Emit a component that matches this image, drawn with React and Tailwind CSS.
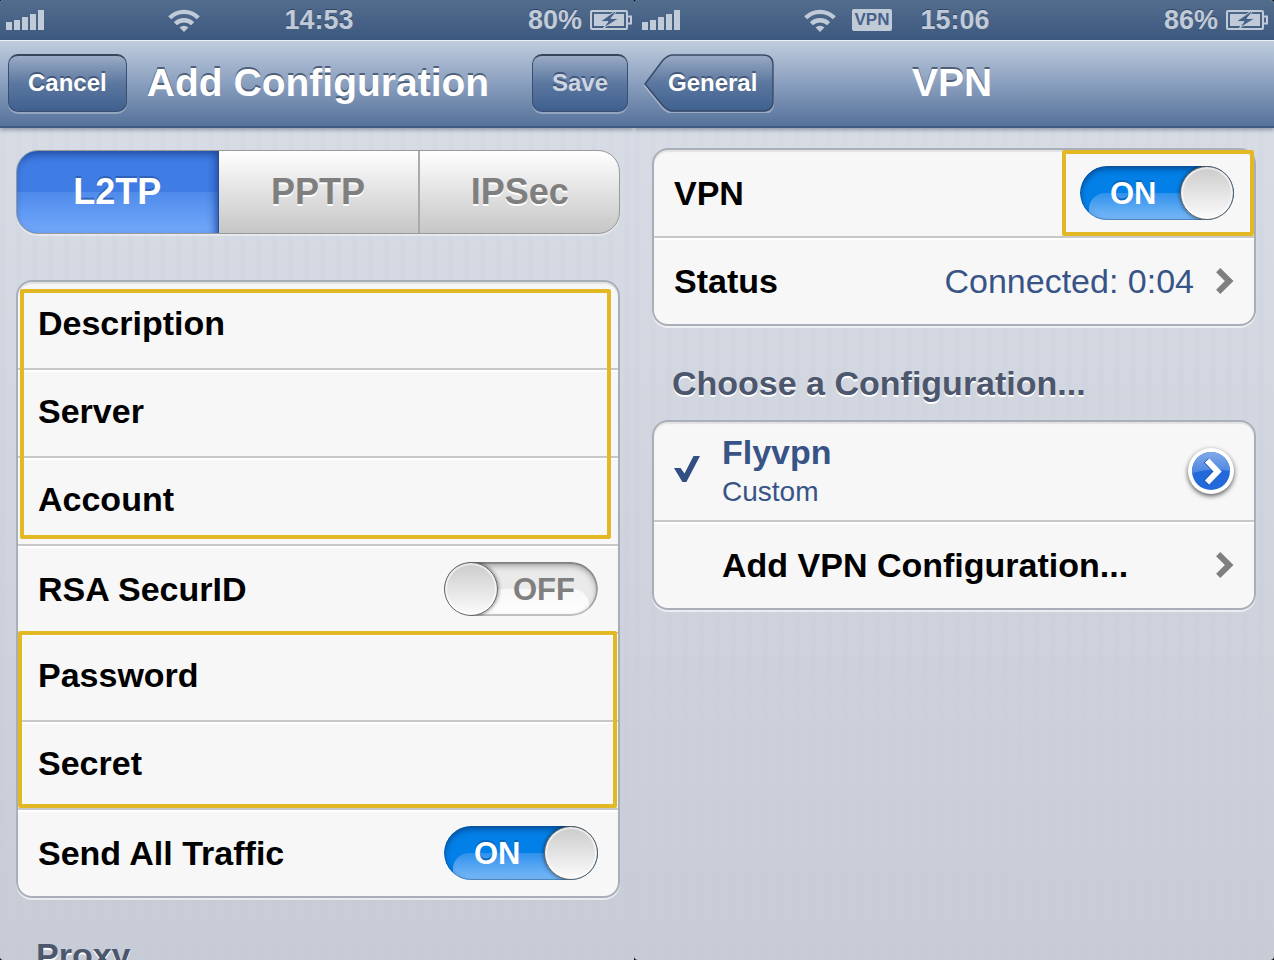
import { useState } from 'react';

const FONT = 'font-["Liberation_Sans",Arial,sans-serif]';

function SignalIcon() {
  return (
    <svg width="38" height="20" viewBox="0 0 38 20" fill="currentColor" aria-hidden="true">
      <rect x="0" y="12" width="6" height="8" />
      <rect x="8" y="10" width="6" height="10" />
      <rect x="16" y="7" width="6" height="13" />
      <rect x="24" y="4" width="6" height="16" />
      <rect x="32" y="0" width="6" height="20" />
    </svg>
  );
}

function WifiIcon() {
  return (
    <svg width="32" height="23" viewBox="0 0 32 23" aria-hidden="true">
      <g fill="none" stroke="currentColor" strokeWidth="4.4">
        <path d="M1.7 8.8 A20.2 20.2 0 0 1 30.3 8.8" />
        <path d="M7.4 14.8 A12.2 12.2 0 0 1 24.6 14.8" />
      </g>
      <path d="M11.6 18.6 A6.2 6.2 0 0 1 20.4 18.6 L16 23 Z" fill="currentColor" />
    </svg>
  );
}

function BatteryIcon() {
  return (
    <svg width="42" height="20" viewBox="0 0 42 20" aria-hidden="true">
      <rect x="1" y="1" width="36" height="18" rx="1" fill="none" stroke="currentColor" strokeWidth="2" />
      <path d="M38 6.5 H41 V13.5 H38" fill="none" stroke="currentColor" strokeWidth="2" />
      <rect x="4" y="4" width="30" height="12" fill="currentColor" />
      <path
        d="M24.5 1.5 L10 11.6 H18 L13 18.5 L29 8.4 H21 L26.5 1.5 Z"
        fill="#46618a"
        stroke="currentColor"
        strokeWidth="1"
      />
    </svg>
  );
}

function Chevron() {
  return (
    <svg width="18" height="26" viewBox="0 0 18 26" className="shrink-0" aria-hidden="true">
      <path d="M2.2 2.2 L13.2 13 L2.2 23.8" fill="none" stroke="#7f7f7f" strokeWidth="6" />
    </svg>
  );
}

function CheckIcon() {
  return (
    <svg width="26" height="26" viewBox="0 0 26 26" aria-hidden="true">
      <path d="M0 12 H6.5 L10.5 17.5 L19.5 0 H26 L12.4 26 H8.4 Z" fill="#324f85" />
    </svg>
  );
}

function StatusBar({ time, battery, vpn, className }) {
  return (
    <div
      className={
        'grid h-10 grid-cols-[1fr_auto_1fr] items-center bg-linear-to-b from-[#536d8e] to-[#3d597f] text-[27px] leading-8 font-bold text-[#c1cad7] text-shadow-[0_-1px_0_#2f4564] ' +
        className
      }
    >
      <div className="flex items-center">
        <SignalIcon />
        <span className="ml-[124px]">
          <WifiIcon />
        </span>
        {vpn && (
          <span className="ml-4 flex h-[22px] w-10 items-center justify-center rounded-xs bg-[#c1cad7] text-[17px] text-[#46618a] text-shadow-none">
            VPN
          </span>
        )}
      </div>
      <time>{time}</time>
      <div className="flex items-center justify-end gap-2">
        <span>{battery}</span>
        <BatteryIcon />
      </div>
    </div>
  );
}

function NavBar({ title, left, right, className }) {
  return (
    <header
      className={
        'relative z-10 grid h-[88px] grid-cols-[1fr_auto_1fr] items-center border-t border-b-2 border-t-[#eef2f7] border-b-[#3d5a84] bg-linear-to-b from-[#c0cddd] via-[#8a9fbf] to-[#56729a] pb-0.5 shadow-[0_2px_4px_rgba(60,70,90,0.45)] ' +
        className
      }
    >
      <div>{left}</div>
      <h1 className="text-[39px] leading-12 font-bold text-white text-shadow-[0_-2px_0_#4f5f78]">{title}</h1>
      <div className="text-right">{right}</div>
    </header>
  );
}

function NavButton({ children, disabled }) {
  return (
    <button
      type="button"
      disabled={disabled}
      className="h-[58px] rounded-[10px] border border-t-2 border-[#3a4e70] border-t-[#38455a] bg-linear-to-b from-[#9aabc5] via-[#5b779f] to-[#3f608f] px-[19px] text-[24px] font-bold text-white shadow-[0_2px_0_rgba(255,255,255,0.3)] text-shadow-[0_-2px_0_#43577a] disabled:text-[#ccd5e2]"
    >
      {children}
    </button>
  );
}

function BackButton({ children }) {
  return (
    <button
      type="button"
      className="relative flex h-[60px] w-[130px] items-center pl-6 text-[24px] font-bold text-white text-shadow-[0_-2px_0_#43577a]"
    >
      <svg width="130" height="60" viewBox="0 0 130 60" className="absolute inset-0" aria-hidden="true">
        <defs>
          <linearGradient id="back" x1="0" y1="0" x2="0" y2="1">
            <stop offset="0" stopColor="#9aabc5" />
            <stop offset="0.5" stopColor="#5b779f" />
            <stop offset="1" stopColor="#3f608f" />
          </linearGradient>
        </defs>
        <path
          d="M1 33 L19 9 Q24 4 29 4 H119 Q129 4 129 14 V50 Q129 60 119 60 H29 Q24 60 19 55 Z"
          fill="none"
          stroke="#ffffff"
          strokeOpacity="0.35"
          strokeWidth="2"
        />
        <path
          d="M1 31 L19 7 Q24 2 29 2 H119 Q129 2 129 12 V48 Q129 58 119 58 H29 Q24 58 19 53 Z"
          fill="url(#back)"
          stroke="#3a4b68"
          strokeWidth="1.5"
        />
      </svg>
      <span className="relative">{children}</span>
    </button>
  );
}

function Switch({ id, defaultChecked }) {
  const [on, setOn] = useState(defaultChecked);
  return (
    <div className="relative h-[54px] w-[154px] shrink-0 overflow-hidden rounded-full text-[31px] leading-[54px] font-bold">
      <input
        id={id}
        type="checkbox"
        role="switch"
        checked={on}
        onChange={(e) => setOn(e.target.checked)}
        className="absolute inset-0 block size-full appearance-none rounded-full bg-[#eaeaea] checked:bg-[#0380e8]"
      />
      <span
        className={
          on
            ? 'pointer-events-none absolute top-[27px] right-0 bottom-0 left-[9px] rounded-tl-[16px] bg-linear-to-b from-[#2d91ec] to-[#78b9f7]'
            : 'pointer-events-none absolute top-[27px] right-[9px] bottom-0 left-0 rounded-tr-[16px] bg-linear-to-b from-[#f7f7f7] to-white'
        }
      />
      <span
        className={
          on
            ? 'pointer-events-none absolute inset-y-0 left-[30px] pt-px text-white text-shadow-[0_-2px_0_#0868bd]'
            : 'pointer-events-none absolute inset-y-0 right-[23px] pt-px text-[#7f7f7f]'
        }
      >
        {on ? 'ON' : 'OFF'}
      </span>
      <span
        className={
          on
            ? 'pointer-events-none absolute inset-0 rounded-full shadow-[inset_0_0_0_1px_rgba(30,80,130,0.4),inset_0_3px_6px_rgba(0,30,80,0.55)]'
            : 'pointer-events-none absolute inset-0 rounded-full shadow-[inset_0_0_0_2px_rgba(0,0,0,0.2),inset_0_3px_7px_rgba(0,0,0,0.4)]'
        }
      />
      <span
        className={
          'pointer-events-none absolute top-0 size-[54px] rounded-full border border-[#606060] bg-linear-to-b from-[#cbcbcb] to-[#fcfcfc] shadow-[0_0_4px_rgba(0,0,0,0.6),inset_0_0_1px_2px_rgba(255,255,255,0.6)] ' +
          (on ? 'right-0' : 'left-0')
        }
      />
    </div>
  );
}

function Card({ children }) {
  return (
    <div className="rounded-[16px] border-2 border-[#a9afb9] bg-[#f7f7f7] text-[34px] leading-10 font-bold text-black shadow-[0_2px_0_rgba(255,255,255,0.6),inset_0_2px_1px_#e2e2e2]">
      {children}
    </div>
  );
}

const ROW = 'flex items-center px-5';
const LINE = ' border-t-2 border-[#c8c8c8] shadow-[inset_0_2px_0_white]';

function FieldRow({ label, type = 'text', first }) {
  const id = label.toLowerCase();
  return (
    <div className={ROW + ' pb-1 ' + (first ? 'h-[86px]' : 'h-[88px]' + LINE)}>
      <label htmlFor={id}>{label}</label>
      <input id={id} type={type} className="ml-4 min-w-0 flex-1 bg-transparent font-normal outline-none" />
    </div>
  );
}

function SwitchRow({ id, label, checked, first }) {
  return (
    <div className={ROW + ' justify-between ' + (first ? 'h-[86px]' : 'h-[88px]' + LINE)}>
      <label htmlFor={id}>{label}</label>
      <Switch id={id} defaultChecked={checked} />
    </div>
  );
}

function SectionTitle({ children }) {
  return (
    <h2 className="mt-[37px] mb-[17px] px-5 text-[34px] leading-10 font-bold text-[#4c566c] text-shadow-[0_2px_0_#fff]">
      {children}
    </h2>
  );
}

function Segments() {
  const [active, setActive] = useState('L2TP');
  return (
    <div className="grid h-[84px] grid-cols-3 overflow-hidden rounded-[22px] border border-[#9a9a9a] bg-linear-to-b from-white to-[#c6c6c6] text-[36px] font-bold shadow-[0_2px_0_rgba(255,255,255,0.4)]">
      {['L2TP', 'PPTP', 'IPSec'].map((name) => (
        <button
          key={name}
          type="button"
          aria-pressed={active === name}
          onClick={() => setActive(name)}
          className={
            active === name
              ? 'relative -m-px rounded-l-[22px] bg-[linear-gradient(#3f7ce3_0_50%,#4f8bea_50%,#73a9fc)] text-white shadow-[inset_-3px_4px_8px_#1f4a9c,inset_0_0_0_1px_#2c5cb0] text-shadow-[0_-2px_0_#2f62b8]'
              : 'text-[#7f7f7f] text-shadow-[0_2px_0_#fff] not-first:not-nth-2:border-l-2 not-first:not-nth-2:border-[#aaaaaa]'
          }
        >
          {name}
        </button>
      ))}
    </div>
  );
}

function Screen({ children, className }) {
  return (
    <section
      className={
        'h-full overflow-hidden bg-[repeating-linear-gradient(90deg,rgba(185,195,220,0.1)_0_6px,transparent_6px_16px),linear-gradient(#dadee7,#c8ccd6)] ' +
        className
      }
    >
      {children}
    </section>
  );
}

export default function App() {
  return (
    <main className={FONT + ' grid h-screen grid-cols-[634fr_640fr] overflow-hidden bg-black'}>
      <Screen className="rounded-l-[3px]">
        <StatusBar time="14:53" battery="80%" className="pr-0.5 pl-1.5" />
        <NavBar
          title="Add Configuration"
          left={<NavButton>Cancel</NavButton>}
          right={<NavButton disabled>Save</NavButton>}
          className="pr-1.5 pl-2"
        />
        <div className="pt-[22px] pr-3.5 pl-4">
          <Segments />
          <div className="h-[46px]" />
          <Card>
            <div className="relative">
              <FieldRow label="Description" first />
              <FieldRow label="Server" />
              <FieldRow label="Account" />
              <div className="pointer-events-none absolute top-[7px] right-[7px] bottom-[5px] left-[2px] rounded-xs border-4 border-[#e2b824]" />
            </div>
            <SwitchRow id="rsa" label="RSA SecurID" checked={false} />
            <div className="relative">
              <FieldRow label="Password" type="password" />
              <FieldRow label="Secret" type="password" />
              <div className="pointer-events-none absolute -top-px right-px bottom-0 left-0 rounded-xs border-4 border-[#e2b824]" />
            </div>
            <SwitchRow id="traffic" label="Send All Traffic" checked />
          </Card>
          <SectionTitle>Proxy</SectionTitle>
        </div>
      </Screen>

      <Screen className="rounded-[4px]">
        <StatusBar time="15:06" battery="86%" vpn className="pr-1.5 pl-2" />
        <NavBar title="VPN" left={<BackButton>General</BackButton>} className="pr-3.5 pl-2.5" />
        <div className="px-[18px] pt-5">
          <Card>
            <div className="relative">
              <SwitchRow id="vpn" label="VPN" checked first />
              <div className="pointer-events-none absolute top-0 right-0 bottom-0 w-[192px] rounded-xs border-4 border-[#e2b824]" />
            </div>
            <button type="button" className={ROW + ' h-[88px] w-full' + LINE}>
              <span className="flex-1 text-left">Status</span>
              <span className="mr-[22px] font-normal text-[#385487]">Connected: 0:04</span>
              <Chevron />
            </button>
          </Card>
          <SectionTitle>Choose a Configuration...</SectionTitle>
          <Card>
            <div className={ROW + ' h-[98px]'}>
              <button type="button" className="flex flex-1 items-center text-left text-[#385487]">
                <span className="w-12 pb-1">
                  <CheckIcon />
                </span>
                <span>
                  <span className="block">Flyvpn</span>
                  <span className="mt-0.5 block text-[28px] leading-9 font-normal">Custom</span>
                </span>
              </button>
              <button
                type="button"
                aria-label="Flyvpn details"
                className="size-[46px] rounded-full bg-white shadow-[0_2px_5px_rgba(0,0,0,0.65)]"
              >
                <svg width="46" height="46" viewBox="0 0 46 46" aria-hidden="true">
                  <defs>
                    <linearGradient id="gloss" x1="0" y1="0" x2="0" y2="1">
                      <stop offset="0" stopColor="#82aae8" />
                      <stop offset="1" stopColor="#4a84e0" />
                    </linearGradient>
                  </defs>
                  <circle cx="23" cy="23" r="19" fill="#2369d9" />
                  <path d="M4 23 A19 19 0 0 1 42 23 Q23 19 4 25 Z" fill="url(#gloss)" />
                  <path d="M18 12.5 L28.5 23.5 L18 34.5" fill="none" stroke="#1148ad" strokeWidth="6" />
                  <path d="M19 12.5 L29.5 23.5 L19 34.5" fill="none" stroke="#fff" strokeWidth="6" />
                </svg>
              </button>
            </div>
            <button type="button" className={ROW + ' h-[88px] w-full' + LINE}>
              <span className="flex-1 pl-12 text-left">Add VPN Configuration...</span>
              <Chevron />
            </button>
          </Card>
        </div>
      </Screen>
    </main>
  );
}
